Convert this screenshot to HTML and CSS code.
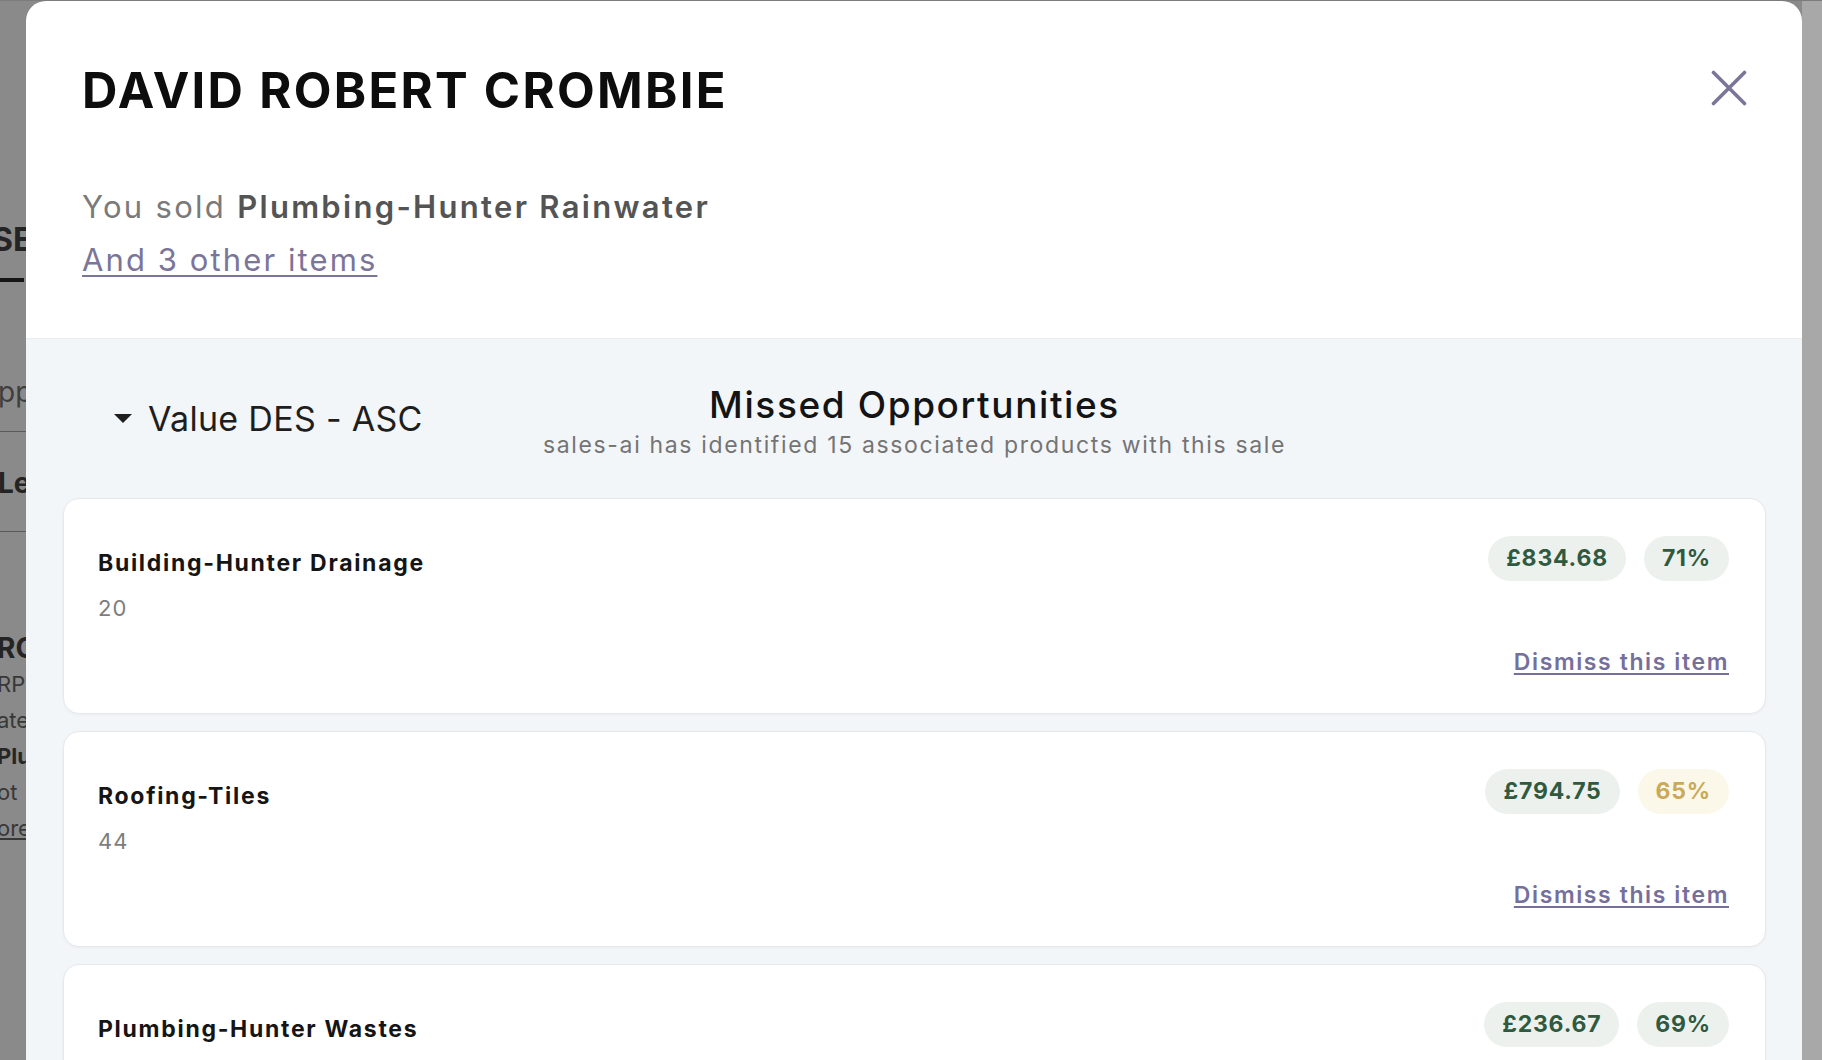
FILE: index.html
```html
<!DOCTYPE html>
<html lang="en">
<head>
<meta charset="utf-8">
<title>Missed Opportunities</title>
<link rel="stylesheet" href="styles.css">
</head>
<body>
<div class="page">
  <div class="page-col">
    <div class="bg-heading">SE</div>
    <div class="bg-tab-bar"></div>
    <div class="bg-row bg-row-muted">pp</div>
    <div class="bg-row bg-row-bold">Le</div>
    <div class="bg-block">
      <div class="bg-strong">RO</div>
      <div class="bg-small">RP</div>
      <div class="bg-small">ate</div>
      <div class="bg-small bg-small-bold">Plu</div>
      <div class="bg-small">ot</div>
      <div class="bg-small bg-small-link">ore</div>
    </div>
  </div>
  <div class="page-fill"></div>
  <div class="page-scroll"></div>
</div>

<div class="modal" role="dialog" aria-label="Sale details">
  <header class="modal-head">
    <h1 class="modal-title">DAVID ROBERT CROMBIE</h1>
    <button class="close-btn" aria-label="Close">
      <svg width="36" height="36" viewBox="0 0 36 36"><path d="M2.5 2.5 L33.5 33.5 M33.5 2.5 L2.5 33.5" stroke="#7a7698" stroke-width="3.6" stroke-linecap="round" fill="none"/></svg>
    </button>
  </header>
  <p class="sold">You sold <strong>Plumbing-Hunter Rainwater</strong></p>
  <a class="others" href="#">And 3 other items</a>

  <section class="missed">
    <div class="missed-head">
      <button class="sort"><span class="caret"></span>Value DES - ASC</button>
      <div class="missed-title">
        <h2>Missed Opportunities</h2>
        <p>sales-ai has identified 15 associated products with this sale</p>
      </div>
    </div>

    <div class="cards">
      <article class="card">
        <div class="card-info">
          <div class="card-name">Building-Hunter Drainage</div>
          <div class="card-qty">20</div>
        </div>
        <div class="card-side">
          <div class="pills">
            <span class="pill">£834.68</span>
            <span class="pill">71%</span>
          </div>
          <a class="dismiss" href="#">Dismiss this item</a>
        </div>
      </article>

      <article class="card">
        <div class="card-info">
          <div class="card-name">Roofing-Tiles</div>
          <div class="card-qty">44</div>
        </div>
        <div class="card-side">
          <div class="pills">
            <span class="pill">£794.75</span>
            <span class="pill pill-warn">65%</span>
          </div>
          <a class="dismiss" href="#">Dismiss this item</a>
        </div>
      </article>

      <article class="card">
        <div class="card-info">
          <div class="card-name">Plumbing-Hunter Wastes</div>
          <div class="card-qty">12</div>
        </div>
        <div class="card-side">
          <div class="pills">
            <span class="pill">£236.67</span>
            <span class="pill">69%</span>
          </div>
          <a class="dismiss" href="#">Dismiss this item</a>
        </div>
      </article>
    </div>
  </section>
</div>
</body>
</html>
```

FILE: styles.css
```css
* { box-sizing: border-box; }

html, body {
  margin: 0;
  padding: 0;
}

body {
  width: 1822px;
  height: 1060px;
  overflow: hidden;
  background: #8a8a8a;
  font-family: "Inter", "Liberation Sans", sans-serif;
  position: relative;
}

/* ---------- background page under the overlay ---------- */
.page {
  display: flex;
  height: 1060px;
  border-top: 1px solid #7c7c7c;
}

.page-col {
  width: 26px;
  overflow: hidden;
  color: #242424;
  white-space: nowrap;
}

.page-fill { flex: 1; }

.page-scroll {
  width: 20px;
  background: #a8a8a8;
}

.bg-heading {
  margin: 219px 0 0 -8px;
  font-size: 32px;
  line-height: 40px;
  font-weight: 700;
}

.bg-tab-bar {
  margin-top: 18px;
  height: 4px;
  width: 24px;
  background: #151515;
}

.bg-row {
  height: 75px;
  margin-left: -2px;
  font-size: 28px;
  line-height: 30px;
  padding-top: 60px;
  border-bottom: 1px solid #5a5a5a;
}

.bg-row-muted {
  height: 150px;
  padding-top: 95px;
  color: #3e3e3e;
}

.bg-row-bold {
  height: 100px;
  padding-top: 36px;
  margin-left: -2px;
  font-weight: 700;
}

.bg-block {
  padding-top: 98px;
  margin-left: -3px;
}

.bg-strong {
  font-size: 28px;
  line-height: 36px;
  font-weight: 700;
}

.bg-small {
  font-size: 22px;
  line-height: 36px;
  color: #383838;
}

.bg-small-bold {
  font-weight: 700;
  color: #262626;
}

.bg-small-link {
  text-decoration: underline;
}

/* ---------- modal ---------- */
.modal {
  position: absolute;
  top: 1px;
  left: 26px;
  width: 1776px;
  height: 1100px;
  background: #ffffff;
  border-radius: 20px 20px 0 0;
  overflow: hidden;
}

.modal-head {
  display: flex;
  justify-content: space-between;
  align-items: center;
  padding: 60px 55px 0 56px;
}

.modal-title {
  margin: 0;
  font-size: 49px;
  line-height: 60px;
  font-weight: 700;
  color: #0d0d0d;
  letter-spacing: 2.3px;
}

.close-btn {
  width: 36px;
  height: 36px;
  padding: 0;
  border: 0;
  background: none;
  display: flex;
  margin-top: -6px;
}

.sold {
  margin: 67px 0 0 56px;
  font-size: 31px;
  line-height: 38px;
  color: #7a7a7a;
  letter-spacing: 2.3px;
}

.sold strong {
  color: #545454;
  font-weight: 600;
}

.others {
  display: inline-block;
  margin: 15px 0 0 56px;
  font-size: 31px;
  line-height: 38px;
  color: #7b7599;
  letter-spacing: 2.1px;
  text-decoration: underline;
  text-decoration-thickness: 1.5px;
  text-underline-offset: 4px;
}

.missed {
  margin-top: 59px;
  background: #f3f6f9;
  border-top: 1px solid #e9edf0;
  padding: 40px 36px 0 37px;
  min-height: 800px;
}

.missed-head {
  display: grid;
  grid-template-columns: 1fr auto 1fr;
  align-items: center;
  padding-bottom: 38px;
}

.sort {
  justify-self: start;
  display: flex;
  align-items: center;
  gap: 16px;
  margin-left: 51px;
  margin-top: -2px;
  padding: 0;
  border: 0;
  background: none;
  font-family: inherit;
  font-size: 34px;
  line-height: 42px;
  letter-spacing: 0.3px;
  color: #1e1e1e;
}

.caret {
  width: 0;
  height: 0;
  border-left: 9.5px solid transparent;
  border-right: 9.5px solid transparent;
  border-top: 9px solid #1e1e1e;
}

.missed-title {
  text-align: center;
}

.missed-title h2 {
  margin: 0;
  padding-top: 3px;
  font-size: 37px;
  line-height: 46px;
  font-weight: 500;
  color: #141414;
  letter-spacing: 1.6px;
}

.missed-title p {
  margin: 3px 0 0;
  font-size: 23px;
  line-height: 29px;
  color: #747474;
  letter-spacing: 1.65px;
}

.cards {
  display: flex;
  flex-direction: column;
  gap: 17px;
}

.card {
  display: flex;
  justify-content: space-between;
  height: 216px;
  padding: 37px 36px 36px 34px;
  background: #ffffff;
  border: 1px solid #e6e9ec;
  border-radius: 16px;
  box-shadow: 0 1px 3px rgba(0, 0, 0, 0.04);
}

.card-info {
  padding-top: 13px;
}

.card-name {
  font-size: 23px;
  line-height: 29px;
  font-weight: 700;
  color: #151515;
  letter-spacing: 1.7px;
}

.card-qty {
  margin-top: 16px;
  font-size: 22px;
  line-height: 28px;
  color: #7d7d7d;
  letter-spacing: 1px;
}

.card-side {
  display: flex;
  flex-direction: column;
  align-items: flex-end;
  justify-content: space-between;
}

.pills {
  display: flex;
  gap: 18px;
}

.pill {
  height: 45px;
  padding: 0 18px;
  border-radius: 23px;
  background: #edf1ee;
  color: #2f5a40;
  font-size: 23px;
  font-weight: 700;
  line-height: 45px;
  letter-spacing: 0.8px;
}

.pill-warn {
  background: #fcf8e9;
  color: #c9aa58;
}

.dismiss {
  font-size: 23px;
  line-height: 29px;
  font-weight: 600;
  color: #756f9b;
  letter-spacing: 1.6px;
  text-decoration: underline;
  text-decoration-thickness: 1.5px;
  text-underline-offset: 3px;
}
```
